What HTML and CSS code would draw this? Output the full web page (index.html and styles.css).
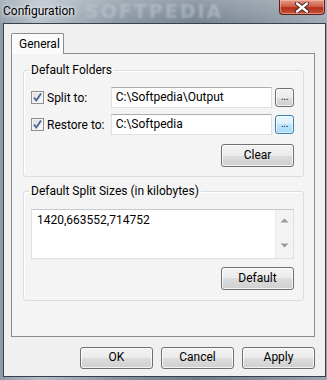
FILE: index.html
```html
<!DOCTYPE html>
<html>
<head>
<meta charset="utf-8">
<link rel="stylesheet" href="styles.css">
</head>
<body>
<div class="window">
  <div class="titlebar">
    <span class="title">Configuration</span>
    <span class="watermark">SOFTPEDIA</span>
    <span class="close"><svg width="16" height="11" viewBox="0 0 16 11"><path d="M3 1.5 L13 9.5 M13 1.5 L3 9.5" stroke="#3a2020" stroke-width="4.2" stroke-linecap="round"/><path d="M3 1.5 L13 9.5 M13 1.5 L3 9.5" stroke="#ffffff" stroke-width="2.4" stroke-linecap="round"/></svg></span>
  </div>
  <div class="client">
    <div class="tabs">
      <div class="tab">General</div>
    </div>
    <div class="panel">
      <fieldset class="group g1">
        <legend>Default Folders</legend>
        <div class="row">
          <label class="check"><span class="box"><svg width="11" height="11" viewBox="0 0 11 11"><path d="M2 5.5 L4.3 8.5 L9 1.5" fill="none" stroke="#4b6396" stroke-width="1.8"/></svg></span>Split to:</label>
          <div class="edit">C:\Softpedia\Output</div>
          <div class="dots"><span>...</span></div>
        </div>
        <div class="row r2">
          <label class="check"><span class="box"><svg width="11" height="11" viewBox="0 0 11 11"><path d="M2 5.5 L4.3 8.5 L9 1.5" fill="none" stroke="#4b6396" stroke-width="1.8"/></svg></span>Restore to:</label>
          <div class="edit">C:\Softpedia</div>
          <div class="dots focus"><span>...</span></div>
        </div>
        <div class="actions"><div class="btn">Clear</div></div>
      </fieldset>
      <fieldset class="group g2">
        <legend>Default Split Sizes (in kilobytes)</legend>
        <div class="memo">
          <div class="memo-text">1420,663552,714752</div>
          <div class="scroll">
            <svg width="9" height="5" viewBox="0 0 9 5"><path d="M0.5 4.5 L4.5 0.5 L8.5 4.5 Z" fill="#9a9a9a"/></svg>
            <svg width="9" height="5" viewBox="0 0 9 5"><path d="M0.5 0.5 L4.5 4.5 L8.5 0.5 Z" fill="#9a9a9a"/></svg>
          </div>
        </div>
        <div class="actions a2"><div class="btn">Default</div></div>
      </fieldset>
    </div>
    <div class="footer">
      <div class="btn fb">OK</div>
      <div class="btn fb">Cancel</div>
      <div class="btn fb">Apply</div>
    </div>
  </div>
</div>
</body>
</html>
```
FILE: styles.css
```css
html, body {
  margin: 0;
  padding: 0;
}
body {
  font-family: "Segoe UI", Roboto, "Noto Sans", sans-serif;
  font-size: 12px;
  color: #000;
  width: 327px;
  height: 380px;
  overflow: hidden;
}
.window {
  width: 327px;
  height: 380px;
  box-sizing: border-box;
  background: linear-gradient(90deg, #8e9ba6 0%, #b3bec7 12%, #8794a0 35%, #6f7d8a 60%, #8894a0 85%, #9aa6b0 100%);
  display: flex;
  flex-direction: column;
}
.titlebar {
  height: 23px;
  display: flex;
  align-items: flex-start;
  background: linear-gradient(180deg, rgba(255,255,255,0.25), rgba(255,255,255,0.05));
}
.title {
  padding: 3px 0 0 3px;
  color: #000;
  text-shadow: 0 0 6px rgba(255,255,255,0.9), 0 0 3px rgba(255,255,255,0.9);
  font-size: 12px;
  line-height: 16px;
  white-space: nowrap;
  width: 82px;
  flex: 0 0 auto;
}
.watermark {
  flex: 0 0 auto;
  margin-right: auto;
  font-family: "DejaVu Sans", sans-serif;
  font-weight: bold;
  font-size: 19px;
  line-height: 22px;
  color: rgba(195, 205, 215, 0.5);
  filter: blur(1px);
  letter-spacing: 2px;
  white-space: nowrap;
}
.close {
  flex: 0 0 auto;
  width: 46px;
  height: 15px;
  margin-right: 2px;
  box-sizing: border-box;
  border: 1px solid #5a1f18;
  border-top: none;
  border-radius: 0 0 4px 4px;
  background: linear-gradient(180deg, #e59a8a 0%, #d0604a 45%, #b3301c 55%, #c8533a 100%);
  box-shadow: inset 0 0 0 1px rgba(255,200,190,0.5);
  display: flex;
  align-items: center;
  justify-content: center;
}
.client {
  margin-left: 3px;
  width: 323px;
  height: 354px;
  box-sizing: border-box;
  border: 1px solid #39424c;
  background: #f0f0f0;
  padding: 9px 0 0 7px;
}
.tabs {
  display: flex;
  height: 20px;
  position: relative;
  z-index: 1;
}
.tab {
  width: 53px;
  height: 21px;
  box-sizing: border-box;
  border: 1px solid #898c95;
  border-bottom: none;
  background: #fbfbfb;
  padding: 2px 0 0 7px;
  line-height: 16px;
  border-radius: 2px 2px 0 0;
}
.panel {
  width: 304px;
  height: 284px;
  box-sizing: border-box;
  border: 1px solid #898c95;
  background: #f4f4f4;
  padding: 9px 10px 0 11px;
}
.group {
  margin: 0;
  border: 1px solid #d5dfe5;
  border-radius: 3px;
  box-shadow: inset 1px 1px 0 #fff;
  padding: 0 9px 0 7px;
  min-width: 0;
}
.group legend {
  padding: 0 2px;
  margin-left: -2px;
  line-height: 15px;
}
.g1 {
  height: 114px;
  box-sizing: border-box;
}
.g2 {
  margin-top: 7px;
  height: 117px;
  box-sizing: border-box;
}
.row {
  display: flex;
  align-items: center;
  margin-top: 9px;
  height: 21px;
}
.r2 {
  margin-top: 6px;
}
.check {
  width: 80px;
  display: flex;
  align-items: center;
  white-space: nowrap;
}
.box {
  width: 13px;
  height: 13px;
  box-sizing: border-box;
  border: 1px solid #8f8f8f;
  background: linear-gradient(135deg, #dcdcdc, #fbfbfb);
  box-shadow: inset 0 0 0 1px #f4f4f4;
  margin-right: 3px;
  display: flex;
  align-items: center;
  justify-content: center;
}
.edit {
  width: 162px;
  height: 21px;
  box-sizing: border-box;
  border: 1px solid #dbdfe6;
  border-top-color: #abadb3;
  background: #fff;
  padding: 0 0 0 4px;
  line-height: 18px;
  white-space: nowrap;
}
.dots {
  width: 19px;
  height: 19px;
  box-sizing: border-box;
  margin-left: 3px;
  border: 1px solid #707070;
  border-radius: 3px;
  background: linear-gradient(180deg, #f2f2f2 0%, #ebebeb 50%, #dddddd 50%, #cfcfcf 100%);
  box-shadow: inset 0 0 0 1px rgba(255,255,255,0.7);
  display: flex;
  justify-content: center;
  font-size: 11px;
  line-height: 18px;
  letter-spacing: -0.5px;
}
.dots span {
  color: #1a1a50;
  margin-top: -1px;
}
.dots.focus {
  border-color: #3c7fb1;
  background: linear-gradient(180deg, #eaf6fd 0%, #d9f0fc 50%, #bee6fd 50%, #a7d9f5 100%);
  box-shadow: inset 0 0 0 1px rgba(255,255,255,0.6);
}
.actions {
  display: flex;
  justify-content: flex-end;
  margin-top: 9px;
  padding-right: 0;
}
.btn {
  width: 73px;
  height: 23px;
  box-sizing: border-box;
  border: 1px solid #707070;
  border-radius: 3px;
  background: linear-gradient(180deg, #f2f2f2 0%, #ebebeb 50%, #dddddd 50%, #cfcfcf 100%);
  box-shadow: inset 0 0 0 1px rgba(255,255,255,0.75);
  text-align: center;
  line-height: 20px;
}
.memo {
  margin-top: 10px;
  height: 50px;
  box-sizing: border-box;
  border: 1px solid #dbdfe6;
  border-top-color: #c6c9cf;
  background: #fff;
  display: flex;
}
.memo-text {
  flex: 1;
  padding: 3px 0 0 5px;
  line-height: 15px;
}
.scroll {
  width: 17px;
  background: #f3f3f3;
  border-left: 1px solid #ececec;
  display: flex;
  flex-direction: column;
  justify-content: space-between;
  align-items: center;
  padding: 8px 0 10px;
}
.a2 {
  margin-top: 8px;
}
.footer {
  display: flex;
  justify-content: flex-end;
  gap: 8px;
  width: 304px;
  margin-top: 10px;
}
.fb {
  height: 22px;
  line-height: 19px;
}
```
